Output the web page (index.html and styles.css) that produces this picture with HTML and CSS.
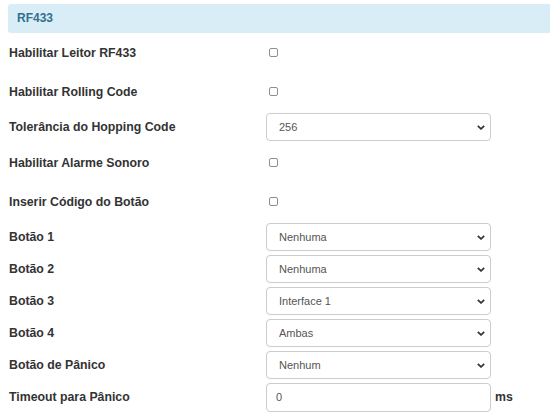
FILE: index.html
```html
<!DOCTYPE html>
<html lang="pt">
<head>
<meta charset="utf-8">
<title>RF433</title>
<link rel="stylesheet" href="styles.css">
</head>
<body>
<div class="panel">
  <div class="panel-heading">RF433</div>
  <div class="form">
    <div class="row row-check">
      <label class="label">Habilitar Leitor RF433</label>
      <div class="control"><input type="checkbox" class="check"></div>
    </div>
    <div class="row row-check">
      <label class="label">Habilitar Rolling Code</label>
      <div class="control"><input type="checkbox" class="check"></div>
    </div>
    <div class="row row-select">
      <label class="label">Tolerância do Hopping Code</label>
      <div class="control"><select class="select"><option>256</option></select></div>
    </div>
    <div class="row row-check">
      <label class="label">Habilitar Alarme Sonoro</label>
      <div class="control"><input type="checkbox" class="check"></div>
    </div>
    <div class="row row-check">
      <label class="label">Inserir Código do Botão</label>
      <div class="control"><input type="checkbox" class="check"></div>
    </div>
    <div class="row row-select">
      <label class="label">Botão 1</label>
      <div class="control"><select class="select"><option>Nenhuma</option></select></div>
    </div>
    <div class="row row-select">
      <label class="label">Botão 2</label>
      <div class="control"><select class="select"><option>Nenhuma</option></select></div>
    </div>
    <div class="row row-select">
      <label class="label">Botão 3</label>
      <div class="control"><select class="select"><option>Interface 1</option></select></div>
    </div>
    <div class="row row-select">
      <label class="label">Botão 4</label>
      <div class="control"><select class="select"><option>Ambas</option></select></div>
    </div>
    <div class="row row-select">
      <label class="label">Botão de Pânico</label>
      <div class="control"><select class="select"><option>Nenhum</option></select></div>
    </div>
    <div class="row row-select">
      <label class="label">Timeout para Pânico</label>
      <div class="control"><input type="text" class="input" value="0"><span class="unit">ms</span></div>
    </div>
  </div>
</div>
</body>
</html>
```

FILE: styles.css
```css
html, body {
  margin: 0;
  padding: 0;
  background: #fff;
}
body {
  font-family: "Liberation Sans", Arial, sans-serif;
  color: #333;
  overflow: hidden;
}
.panel {
  padding: 4px 0 0 8px;
}
.panel-heading {
  height: 29px;
  line-height: 29px;
  background: #d9edf7;
  color: #31708f;
  font-weight: bold;
  font-size: 12px;
  padding-left: 9px;
  border-radius: 3px 0 0 3px;
  margin-right: -10px;
}
.form {
  display: flex;
  flex-direction: column;
}
.row {
  display: flex;
  align-items: center;
}
.row-check {
  height: 39px;
}
.row-select {
  height: 32px;
}
.label {
  width: 258px;
  padding-left: 1px;
  box-sizing: border-box;
  font-size: 12.3px;
  font-weight: bold;
  color: #333;
}
.control {
  display: flex;
  align-items: center;
}
.check {
  -webkit-appearance: none;
  appearance: none;
  width: 9px;
  height: 9px;
  margin: 0 0 0 3px;
  border: 1px solid #8f8f8f;
  border-radius: 2px;
  background: #fff;
  box-sizing: border-box;
}
.select, .input {
  -webkit-appearance: none;
  appearance: none;
  width: 225px;
  height: 28px;
  margin: 0;
  box-sizing: border-box;
  border: 1px solid #ccc;
  border-radius: 4px;
  background-color: #fff;
  font-family: "Liberation Sans", Arial, sans-serif;
  font-size: 11px;
  color: #555;
  outline: none;
}
.select {
  padding: 0 20px 0 12px;
  background-image: url("data:image/svg+xml,%3Csvg xmlns='http://www.w3.org/2000/svg' width='8' height='5' viewBox='0 0 8 5'%3E%3Cpath d='M0.8 0.8 L4 3.9 L7.2 0.8' fill='none' stroke='%23333' stroke-width='1.7'/%3E%3C/svg%3E");
  background-repeat: no-repeat;
  background-position: right 5px center;
  background-size: 8px 5px;
}
.input {
  height: 29px;
  padding: 0 9px;
}
.unit {
  margin-left: 4px;
  font-size: 12.3px;
  font-weight: bold;
  color: #333;
}
```
